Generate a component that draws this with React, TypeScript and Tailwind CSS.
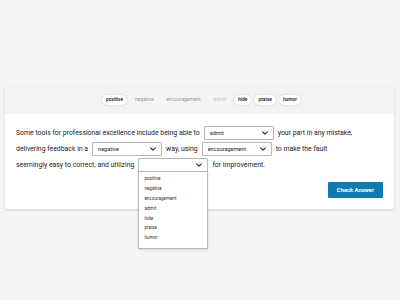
import React from 'react';

const WORDS = ['positive', 'negative', 'encouragement', 'admit', 'hide', 'praise', 'humor'];
const USED: Record<string, string> = { negative: 'text-[#9a9a9a]', encouragement: 'text-[#9a9a9a]', admit: 'text-[#c4c4c4]' };

const Chevron = () => (
  <svg width="6" height="4" viewBox="0 0 10 6" className="shrink-0">
    <path d="M1 1l4 4 4-4" fill="none" stroke="#222" strokeWidth="1.8" strokeLinecap="round" strokeLinejoin="round" />
  </svg>
);

const Select = ({ value, open }: { value?: string; open?: boolean }) => (
  <div className="relative shrink-0">
    <div className="flex items-center justify-between w-[70px] h-[14px] px-[5px] bg-white border border-[#b8b8b8] rounded-[1px] text-[5.5px] text-[#222]">
      <span>{value ?? ''}</span>
      <Chevron />
    </div>
    {open && (
      <div className="absolute left-0 top-[13px] w-[70px] bg-white border border-[#b8b8b8] pt-[3px] pb-[4px] z-10 shadow-sm">
        {WORDS.map((w) => (
          <div key={w} className="h-[9.8px] px-[5px] flex items-center text-[4.6px] text-[#333]">{w}</div>
        ))}
      </div>
    )}
  </div>
);

const Line = ({ children }: { children: React.ReactNode }) => (
  <div className="flex items-center h-[16px] gap-[4px] whitespace-nowrap">{children}</div>
);

export default function App() {
  return (
    <div className="w-[400px] h-[300px] bg-[#f5f5f5] pt-[86px] px-[5px]" style={{ fontFamily: 'Roboto, "Liberation Sans", sans-serif' }}>
      <div className="w-[389px] bg-white shadow-[0_1px_3px_rgba(0,0,0,0.15)] rounded-[2px]">
        <div className="h-[28px] bg-[#f4f4f4] flex items-center justify-center gap-[3px] text-[4.9px] pl-[4px]">
          {WORDS.map((w) =>
            USED[w] ? (
              <span key={w} className={`px-[5px] ${USED[w]}`}>{w}</span>
            ) : (
              <span key={w} className="px-[4px] h-[10px] flex items-center rounded-full bg-white text-[#111] font-medium shadow-[0_0_2px_rgba(0,0,0,0.2)]">{w}</span>
            )
          )}
        </div>
        <div className="px-[11px] pt-[11px] pb-[11px] text-[6.9px] text-[#222]">
          <Line>
            <span>Some tools for professional excellence include being able to</span>
            <Select value="admit" />
            <span>your part in any mistake,</span>
          </Line>
          <Line>
            <span>delivering feedback in a</span>
            <Select value="negative" />
            <span>way, using</span>
            <Select value="encouragement" />
            <span>to make the fault</span>
          </Line>
          <Line>
            <span>seemingly easy to correct, and utilizing</span>
            <Select open />
            <span>for improvement.</span>
          </Line>
          <div className="flex justify-end mt-[9px]">
            <button className="w-[55px] h-[16px] bg-[#0f7ab0] text-white text-[5.8px] font-bold rounded-[1px]">Check Answer</button>
          </div>
        </div>
      </div>
    </div>
  );
}
